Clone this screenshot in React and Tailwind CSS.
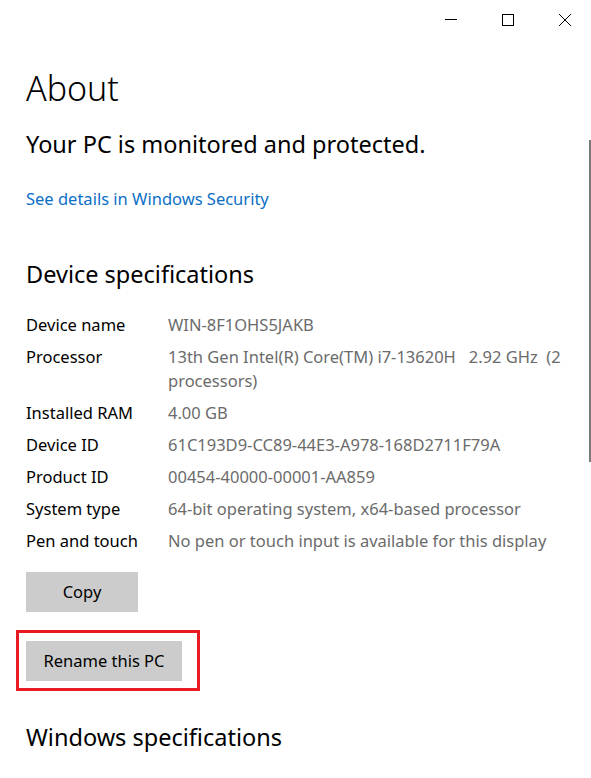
const specs = [
  ['Device name', 'WIN-8F1OHS5JAKB'],
  ['Processor', '13th Gen Intel(R) Core(TM) i7-13620H   2.92 GHz  (2 processors)'],
  ['Installed RAM', '4.00 GB'],
  ['Device ID', '61C193D9-CC89-44E3-A978-168D2711F79A'],
  ['Product ID', '00454-40000-00001-AA859'],
  ['System type', '64-bit operating system, x64-based processor'],
  ['Pen and touch', 'No pen or touch input is available for this display'],
];

export default function App() {
  return (
    <div className="relative w-[591px] h-[778px] overflow-hidden bg-white text-black font-['Noto_Sans',sans-serif]">
      {/* Title bar */}
      <div className="flex justify-end items-start gap-[45px] pr-[20px] pt-[14px] h-[40px]">
        <svg width="12" height="12" viewBox="0 0 12 12" className="text-black">
          <path d="M0 5.5H12" stroke="currentColor" strokeWidth="1" />
        </svg>
        <svg width="12" height="12" viewBox="0 0 12 12" className="text-black">
          <rect x="0.5" y="0.5" width="11" height="11" fill="none" stroke="currentColor" strokeWidth="1" />
        </svg>
        <svg width="12" height="12" viewBox="0 0 12 12" className="text-black">
          <path d="M0 0L12 12M12 0L0 12" stroke="currentColor" strokeWidth="1" />
        </svg>
      </div>

      {/* Scrollbar */}
      <div className="absolute right-0 top-[140px] w-[2px] h-[322px] bg-[#7a7a7a]" />

      <div className="pl-[26px] pr-[28px]">
        <h1 className="mt-[26px] text-[34px] font-light leading-[44px]">About</h1>

        <p className="mt-[19px] text-[23.5px] leading-[30px]">Your PC is monitored and protected.</p>

        <a className="block mt-[28px] text-[16.5px] leading-[24px] text-[#0b6fc6]">See details in Windows Security</a>

        <h2 className="mt-[48px] text-[23.5px] leading-[30px]">Device specifications</h2>

        <div className="mt-[24px] flex flex-col gap-[8px] text-[16.5px] leading-[24px]">
          {specs.map(([label, value]) => (
            <div key={label} className="flex">
              <div className="w-[142px] shrink-0">{label}</div>
              <div className="text-[#6b6b6b] whitespace-pre-wrap">{value}</div>
            </div>
          ))}
        </div>

        <button className="mt-[19px] w-[112px] h-[40px] bg-[#cccccc] text-[16.5px]">Copy</button>

        <div className="mt-[18px] -ml-[10px] w-[184px] h-[61px] border-[3px] border-[#e81b23] pl-[7px] pt-[8px]">
          <button className="w-[156px] h-[40px] bg-[#cccccc] text-[16.5px]">Rename this PC</button>
        </div>

        <h2 className="mt-[30px] text-[23.5px] leading-[32px]">Windows specifications</h2>
      </div>
    </div>
  );
}
